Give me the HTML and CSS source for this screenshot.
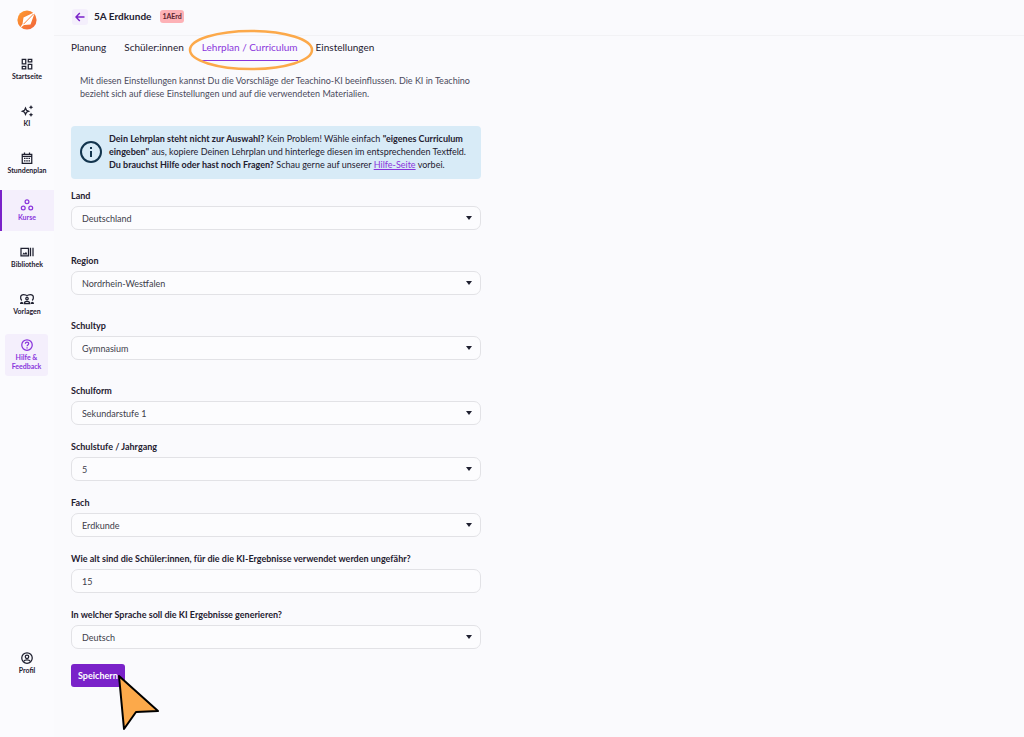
FILE: index.html
```html
<!DOCTYPE html>
<html lang="de">
  <head>
    <meta charset="utf-8">
    <meta name="viewport" content="width=device-width, initial-scale=1">
    <title>5A Erdkunde - Lehrplan / Curriculum</title>
    <link rel="stylesheet" href="styles.css">
  </head>
  <body>
    <nav class="sidebar">
      <a class="logo" href="#" aria-label="Teachino">
        <svg width="20" height="20" viewBox="0 0 20 20">
          <defs>
            <linearGradient id="flame" x1="0" y1="0" x2="1" y2="1">
              <stop offset="0" stop-color="#ff9d2e"/>
              <stop offset="1" stop-color="#f0623c"/>
            </linearGradient>
          </defs>
          <circle cx="10" cy="10" r="9.6" fill="url(#flame)"/>
          <path d="M18 2 6.500 7.500 5.500 14 2 19l5-4 6.500-.5z" fill="#fff"/>
          <path d="M16.500 4 6.500 14.200" stroke="#f9803a" stroke-width="1"/>
        </svg>
      </a>
      <a class="item" href="#">
        <svg class="icon" viewBox="0 0 24 24"><path d="M2.500 2.500h7v9h-7zM14.500 2.500h7v5h-7zM14.500 12.500h7v9h-7zM2.500 16.500h7v5h-7z"/></svg>
        Startseite
      </a>
      <a class="item" href="#">
        <svg class="icon" viewBox="0 0 24 24"><path d="M9 6l2 4.500 4.500 2-4.500 2L9 19l-2-4.500-4.500-2 4.500-2z"/><path class="solid" d="M20 0l1.400 3.100L24.500 4.500l-3.100 1.400L20 9l-1.400-3.100-3.100-1.400 3.100-1.400zM20 15l1.400 3.100 3.100 1.400-3.100 1.400L20 24l-1.400-3.100-3.100-1.400 3.100-1.400z"/></svg>
        KI
      </a>
      <a class="item" href="#">
        <svg class="icon" viewBox="0 0 24 24"><path d="M2.500 4.500h19v18h-19zM2.500 8.500h19M7 1v4M17 1v4"/><path class="solid" d="M6 11.500h3V14H6zM10.500 11.500h3V14h-3zM15 11.500h3V14h-3zM6 16.500h3V19H6zM10.500 16.500h3V19h-3zM15 16.500h3V19h-3z"/></svg>
        Stundenplan
      </a>
      <a class="item active" href="#">
        <svg class="icon" viewBox="0 0 24 24"><circle cx="12" cy="5.500" r="3.800"/><circle cx="4.500" cy="18" r="3.800"/><circle cx="19.500" cy="18" r="3.800"/></svg>
        Kurse
      </a>
      <a class="item" href="#">
        <svg class="icon" viewBox="0 0 24 24"><path d="M0 4.500h15v15H0zM19 3.500v17M24 3.500v17"/><path class="solid" d="M2.500 17l3-4 2 2L10 11.500l3 5.500z"/></svg>
        Bibliothek
      </a>
      <a class="item" href="#">
        <svg class="icon" viewBox="0 0 24 24"><path d="M1.500 15C-2 11-2 3 5 3c3.500 0 6 1 7 2.500C13 4 15.500 3 19 3c7 0 7 8 3.500 12"/><circle cx="12" cy="11" r="2.500"/><path d="M6.500 21c0-6 11-6 11 0z"/><path class="solid" d="M-2 22c0-6 6.500-6 6.500 0zM19.500 22c0-6 6.500-6 6.500 0z"/></svg>
        Vorlagen
      </a>
      <a class="item help" href="#">
        <svg class="icon" viewBox="0 0 24 24"><circle cx="12" cy="12" r="10.500"/><path d="M8.800 9.500c0-4.500 6.600-4 6.600-.3 0 2.500-3.300 2.800-3.300 5.300M12.100 16.500v2.300"/></svg>
        Hilfe &amp;<br>Feedback
      </a>
      <a class="item profile" href="#">
        <svg class="icon" viewBox="0 0 24 24"><circle cx="12" cy="12" r="10.500"/><circle cx="12" cy="9.500" r="3.500"/><path d="M5 19c3-4.500 11-4.500 14 0"/></svg>
        Profil
      </a>
    </nav>

    <div class="page">
      <header class="topbar">
        <button class="back" type="button" aria-label="Zurück">
          <svg width="10" height="10" viewBox="0 0 10 10"><path d="M9.500 5H1M4.800 1 1 5l3.800 4"/></svg>
        </button>
        <h1>5A Erdkunde</h1>
        <span class="badge">1AErd</span>
      </header>

      <div class="tabs">
        <a href="#">Planung</a>
        <a href="#">Schüler:innen</a>
        <a class="current" href="#">Lehrplan / Curriculum
          <svg class="ring" viewBox="0 0 126 42"><ellipse cx="63" cy="21" rx="61" ry="19"/></svg>
        </a>
        <a href="#">Einstellungen</a>
      </div>

      <main>
        <p class="intro">Mit diesen Einstellungen kannst Du die Vorschläge der Teachino-KI beeinflussen. Die KI in Teachino bezieht sich auf diese Einstellungen und auf die verwendeten Materialien.</p>

        <div class="notice">
          <svg width="24" height="24" viewBox="0 0 24 24"><circle cx="12" cy="12" r="10"/><path d="M12 11v6M12 7v2"/></svg>
          <p><b>Dein Lehrplan steht nicht zur Auswahl?</b> Kein Problem! Wähle einfach <b>"eigenes Curriculum eingeben"</b> aus, kopiere Deinen Lehrplan und hinterlege diesen im entsprechenden Textfeld.<br>
          <b>Du brauchst Hilfe oder hast noch Fragen?</b> Schau gerne auf unserer <a href="#">Hilfe-Seite</a> vorbei.</p>
        </div>

        <form>
          <div class="field wide">
            <label for="land">Land</label>
            <select id="land"><option>Deutschland</option></select>
          </div>
          <div class="field wide">
            <label for="region">Region</label>
            <select id="region"><option>Nordrhein-Westfalen</option></select>
          </div>
          <div class="field wide">
            <label for="schultyp">Schultyp</label>
            <select id="schultyp"><option>Gymnasium</option></select>
          </div>
          <div class="field">
            <label for="schulform">Schulform</label>
            <select id="schulform"><option>Sekundarstufe 1</option></select>
          </div>
          <div class="field">
            <label for="stufe">Schulstufe / Jahrgang</label>
            <select id="stufe"><option>5</option></select>
          </div>
          <div class="field">
            <label for="fach">Fach</label>
            <select id="fach"><option>Erdkunde</option></select>
          </div>
          <div class="field">
            <label for="alter">Wie alt sind die Schüler:innen, für die die KI-Ergebnisse verwendet werden ungefähr?</label>
            <input id="alter" type="text" value="15">
          </div>
          <div class="field">
            <label for="sprache">In welcher Sprache soll die KI Ergebnisse generieren?</label>
            <select id="sprache"><option>Deutsch</option></select>
          </div>
          <div class="save">
            <button type="button">Speichern</button>
            <svg class="pointer" width="44" height="58" viewBox="0 0 44 58"><path d="M2 3 41 38 19 39 7 56z"/></svg>
          </div>
        </form>
      </main>
    </div>
  </body>
</html>
```
FILE: styles.css
```css
* {
  box-sizing: border-box;
}
body {
  margin: 0;
  display: flex;
  min-height: 100vh;
  background-color: #fafafd;
  color: #1f2030;
  font-family: Lato, sans-serif;
  font-size: 9px;
  line-height: 13px;
}
a {
  color: inherit;
  text-decoration: none;
}
p {
  margin: 0;
}
button, input, select {
  font: inherit;
}

/* Sidebar */
.sidebar {
  width: 54px;
  flex: none;
  display: flex;
  flex-direction: column;
  gap: 6px;
  background-color: #fbfbfe;
}
.logo {
  height: 43px;
  padding-top: 10px;
  text-align: center;
}
.item {
  height: 41px;
  display: flex;
  flex-direction: column;
  align-items: center;
  padding-top: 9px;
  font-size: 7px;
  line-height: 9px;
  font-weight: bold;
  text-align: center;
}
.icon {
  width: 12px;
  height: 12px;
  flex: none;
  margin-bottom: 2px;
  overflow: visible;
  fill: none;
  stroke: currentColor;
  stroke-width: 2.5;
}
.icon .solid {
  fill: currentColor;
  stroke: none;
}
.item.active {
  color: #8a35dc;
  background-color: #f4effc;
  box-shadow: inset 2px 0 #7a22c9;
}
.item.help {
  margin: 3px 6px 0 5px;
  height: 42px;
  padding-top: 5px;
  border-radius: 3px;
  color: #8a35dc;
  background-color: #f4effc;
}
.item.profile {
  margin-top: auto;
  margin-bottom: 53px;
}

/* Header and tabs */
.page {
  flex: 1;
  min-width: 0;
}
.topbar {
  height: 36px;
  display: flex;
  align-items: center;
  padding: 0 18px 2px;
  border-bottom: 1px solid #f2f2f5;
}
.back {
  width: 16px;
  height: 16px;
  display: grid;
  place-items: center;
  padding: 0;
  border: 0;
  border-radius: 3px;
  background-color: #f4effc;
}
.back svg {
  fill: none;
  stroke: #7a22c9;
  stroke-width: 1.4;
}
h1 {
  margin: 0 9px 0 6px;
  font-size: 10px;
  font-weight: bold;
}
.badge {
  padding: 0 2px;
  border-radius: 3px;
  background-color: #fdb1b6;
  color: #5a2530;
  font-size: 7px;
  font-weight: bold;
}
.tabs {
  display: flex;
  gap: 18px;
  padding: 4px 17px 0;
  font-size: 10px;
}
.tabs a {
  height: 21px;
  padding-top: 1px;
}
.tabs .current {
  position: relative;
  color: #8a35dc;
  border-bottom: 1px solid #8a35dc;
}
.ring {
  position: absolute;
  left: -14px;
  top: -11px;
  width: 126px;
  height: 42px;
  fill: none;
  stroke: #fca94a;
  stroke-width: 2.5;
}

/* Settings form */
main {
  max-width: 444px;
  padding: 13px 17px 24px;
}
.intro {
  padding: 0 9px;
  color: #4a4a5c;
}
.notice {
  display: flex;
  align-items: center;
  gap: 6px;
  margin-top: 26px;
  padding: 6px 8px 8px;
  border-radius: 4px;
  background-color: #d8ebf7;
}
.notice svg {
  flex: none;
  fill: none;
  stroke: #12344d;
  stroke-width: 2;
}
.notice a {
  color: #8a35dc;
  text-decoration: underline;
}
form {
  padding-top: 10px;
}
.field {
  margin-bottom: 15px;
}
.field.wide {
  margin-bottom: 24px;
}
.field label {
  display: block;
  margin-bottom: 4px;
  font-weight: bold;
}
.field select, .field input {
  appearance: none;
  display: block;
  width: 100%;
  height: 24px;
  padding: 0 10px;
  border: 1px solid #e2e2e6;
  border-radius: 7px;
  background-color: #fcfcfe;
  color: #3c3c4a;
}
.field select {
  background-image: url("data:image/svg+xml,%3Csvg xmlns='http://www.w3.org/2000/svg' width='6' height='4'%3E%3Cpath d='M0 0h6L3 4z' fill='%231f2030'/%3E%3C/svg%3E");
  background-position: right 8px center;
  background-repeat: no-repeat;
}
.save {
  position: relative;
}
.save button {
  height: 23px;
  padding: 0 7px;
  border: 0;
  border-radius: 3px;
  background-color: #7a22c9;
  color: white;
  font-weight: bold;
}
.pointer {
  position: absolute;
  left: 46px;
  top: 9px;
  fill: #fca94a;
  stroke: black;
  stroke-width: 2;
  stroke-linejoin: round;
}
```
